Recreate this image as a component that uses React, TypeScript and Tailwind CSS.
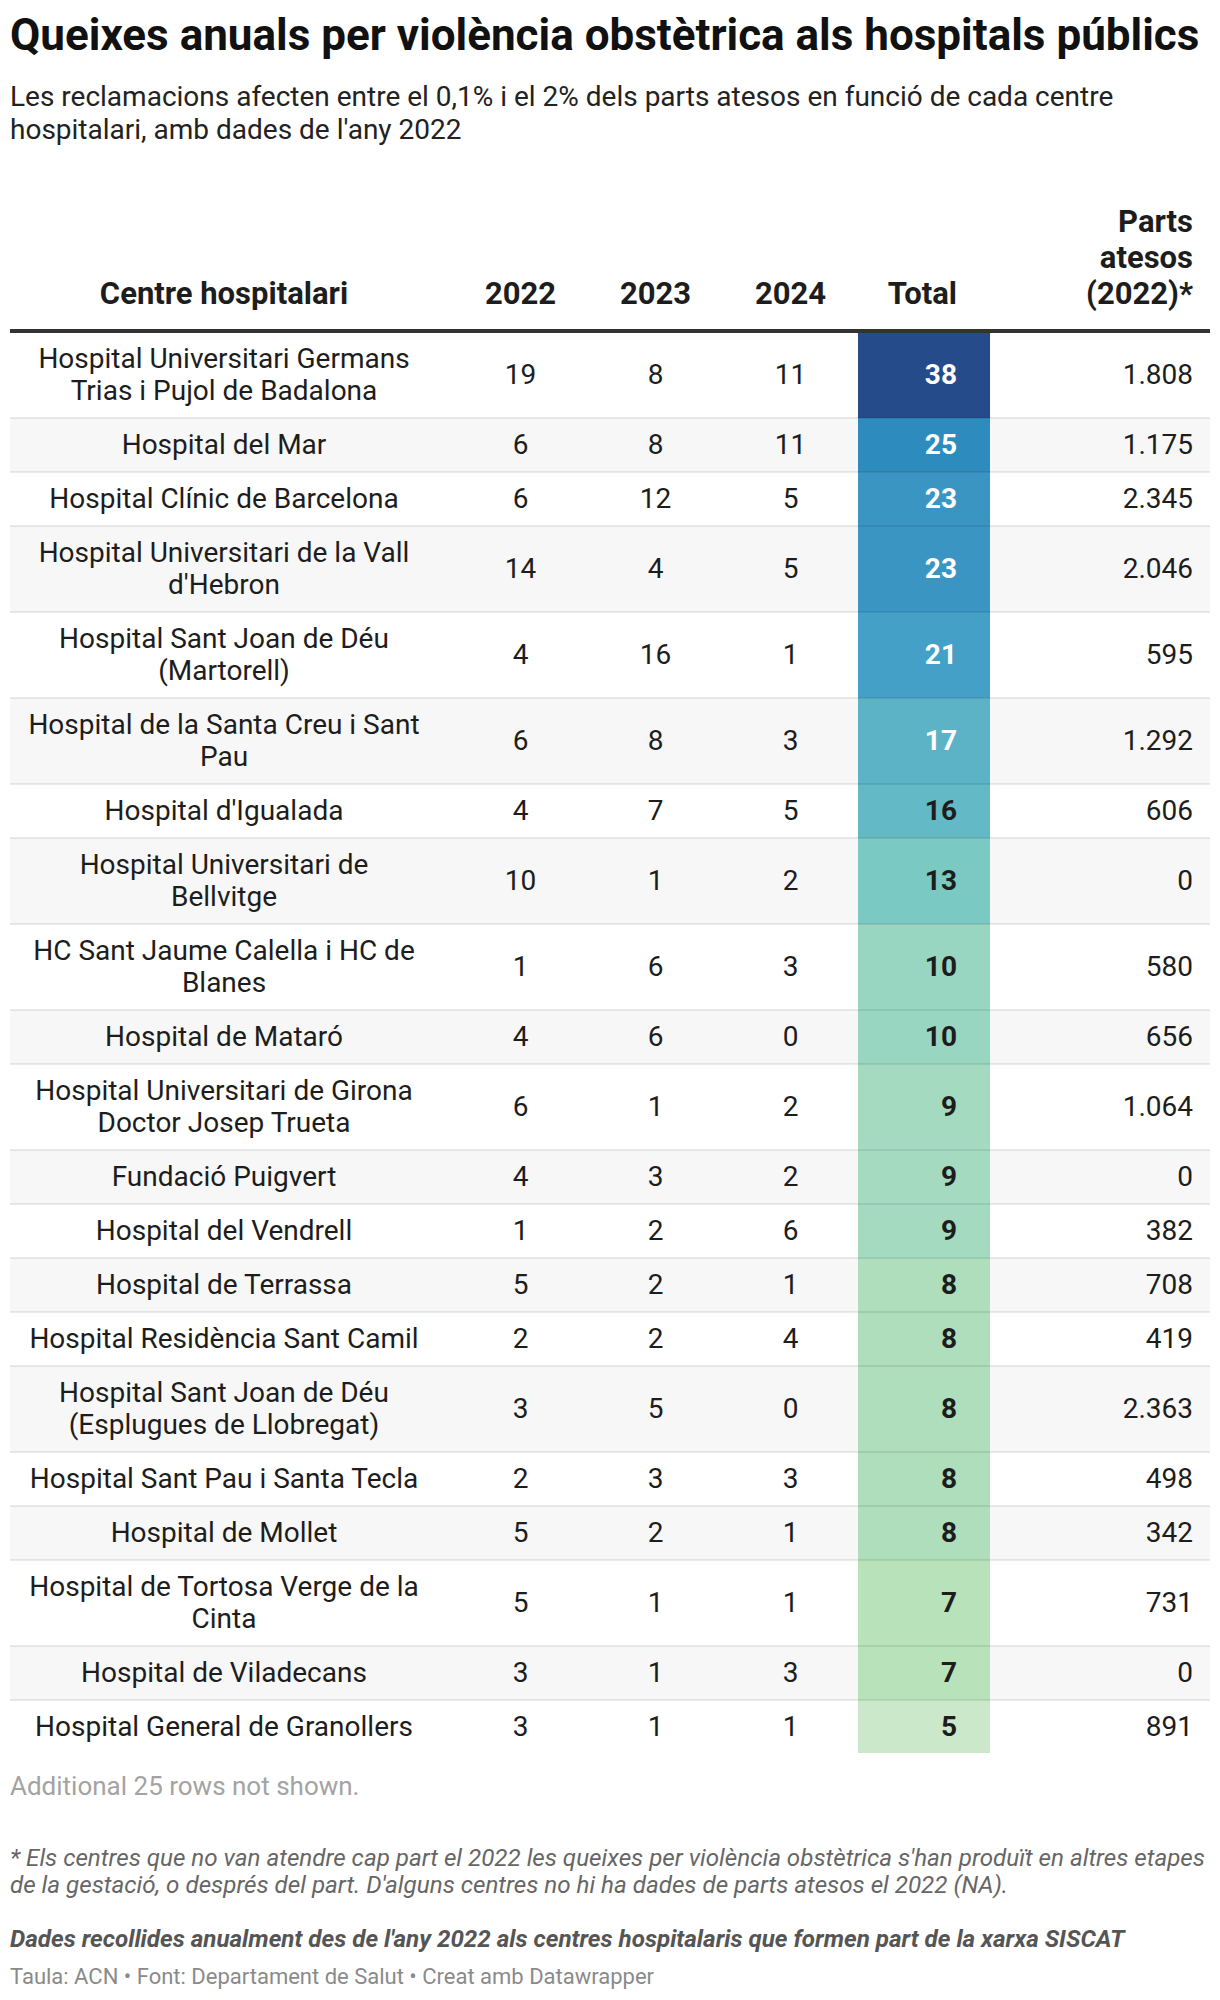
type Row = {
  name: string[];
  y22: number;
  y23: number;
  y24: number;
  total: number;
  parts: string;
};

const ROWS: Row[] = [
  { name: ["Hospital Universitari Germans", "Trias i Pujol de Badalona"], y22: 19, y23: 8, y24: 11, total: 38, parts: "1.808" },
  { name: ["Hospital del Mar"], y22: 6, y23: 8, y24: 11, total: 25, parts: "1.175" },
  { name: ["Hospital Clínic de Barcelona"], y22: 6, y23: 12, y24: 5, total: 23, parts: "2.345" },
  { name: ["Hospital Universitari de la Vall", "d'Hebron"], y22: 14, y23: 4, y24: 5, total: 23, parts: "2.046" },
  { name: ["Hospital Sant Joan de Déu", "(Martorell)"], y22: 4, y23: 16, y24: 1, total: 21, parts: "595" },
  { name: ["Hospital de la Santa Creu i Sant", "Pau"], y22: 6, y23: 8, y24: 3, total: 17, parts: "1.292" },
  { name: ["Hospital d'Igualada"], y22: 4, y23: 7, y24: 5, total: 16, parts: "606" },
  { name: ["Hospital Universitari de", "Bellvitge"], y22: 10, y23: 1, y24: 2, total: 13, parts: "0" },
  { name: ["HC Sant Jaume Calella i HC de", "Blanes"], y22: 1, y23: 6, y24: 3, total: 10, parts: "580" },
  { name: ["Hospital de Mataró"], y22: 4, y23: 6, y24: 0, total: 10, parts: "656" },
  { name: ["Hospital Universitari de Girona", "Doctor Josep Trueta"], y22: 6, y23: 1, y24: 2, total: 9, parts: "1.064" },
  { name: ["Fundació Puigvert"], y22: 4, y23: 3, y24: 2, total: 9, parts: "0" },
  { name: ["Hospital del Vendrell"], y22: 1, y23: 2, y24: 6, total: 9, parts: "382" },
  { name: ["Hospital de Terrassa"], y22: 5, y23: 2, y24: 1, total: 8, parts: "708" },
  { name: ["Hospital Residència Sant Camil"], y22: 2, y23: 2, y24: 4, total: 8, parts: "419" },
  { name: ["Hospital Sant Joan de Déu", "(Esplugues de Llobregat)"], y22: 3, y23: 5, y24: 0, total: 8, parts: "2.363" },
  { name: ["Hospital Sant Pau i Santa Tecla"], y22: 2, y23: 3, y24: 3, total: 8, parts: "498" },
  { name: ["Hospital de Mollet"], y22: 5, y23: 2, y24: 1, total: 8, parts: "342" },
  { name: ["Hospital de Tortosa Verge de la", "Cinta"], y22: 5, y23: 1, y24: 1, total: 7, parts: "731" },
  { name: ["Hospital de Viladecans"], y22: 3, y23: 1, y24: 3, total: 7, parts: "0" },
  { name: ["Hospital General de Granollers"], y22: 3, y23: 1, y24: 1, total: 5, parts: "891" },
];

// heatmap colours for the Total column
const HEAT: Record<number, string> = {
  38: "bg-[#254b8a] text-white",
  25: "bg-[#2d8bbd] text-white",
  23: "bg-[#3a95c2] text-white",
  21: "bg-[#45a0c7] text-white",
  17: "bg-[#5db3c6] text-white",
  16: "bg-[#63b9c6] text-[#1d1d1d]",
  13: "bg-[#7ac9c3] text-[#1d1d1d]",
  10: "bg-[#98d6c1] text-[#1d1d1d]",
  9: "bg-[#a4dac0] text-[#1d1d1d]",
  8: "bg-[#aedebb] text-[#1d1d1d]",
  7: "bg-[#b8e2ba] text-[#1d1d1d]",
  5: "bg-[#cbe9ca] text-[#1d1d1d]",
};

export default function App() {
  return (
    <div className="w-[1220px] bg-white px-[10px] pt-[9px] pb-[20px] font-['Roboto',sans-serif] text-[#1d1d1d]">
      <h1 className="whitespace-nowrap text-[44px] font-bold leading-[52px] text-[#111]">
        Queixes anuals per violència obstètrica als hospitals públics
      </h1>
      <p className="mt-[19px] text-[28px] leading-[33px] text-[#222]">
        Les reclamacions afecten entre el 0,1% i el 2% dels parts atesos en funció de cada centre hospitalari, amb
        dades de l'any 2022
      </p>

      <table className="mt-[58px] w-full table-fixed border-collapse">
        <colgroup>
          <col className="w-[443px]" />
          <col className="w-[135px]" />
          <col className="w-[135px]" />
          <col className="w-[135px]" />
          <col className="w-[132px]" />
          <col />
        </colgroup>
        <thead>
          <tr className="text-[31px] font-bold leading-[36px] text-[#1d1d1d]">
            <th className="border-b-4 border-[#333] pb-[17px] pl-[14px] pr-[29px] text-center align-bottom">
              Centre hospitalari
            </th>
            <th className="border-b-4 border-[#333] pb-[17px] text-center align-bottom">2022</th>
            <th className="border-b-4 border-[#333] pb-[17px] text-center align-bottom">2023</th>
            <th className="border-b-4 border-[#333] pb-[17px] text-center align-bottom">2024</th>
            <th className="border-b-4 border-[#333] pb-[17px] pr-[33px] text-right align-bottom">Total</th>
            <th className="border-b-4 border-[#333] pb-[17px] pr-[17px] text-right align-bottom">
              Parts
              <br />
              atesos
              <br />
              (2022)*
            </th>
          </tr>
        </thead>
        <tbody>
          {ROWS.map((r, i) => {
            const last = i === ROWS.length - 1;
            const cell = last ? "py-[10px]" : "border-b-2 border-[rgba(0,0,0,0.08)] py-[10px]";
            return (
              <tr
                key={i}
                className={`${i % 2 === 1 ? "bg-[#f7f7f7]" : "bg-white"} text-[28px] leading-[32px]`}
              >
                <td className={`${cell} pl-[14px] pr-[29px] text-center align-middle`}>
                  {r.name.map((line, j) => (
                    <div key={j} className="whitespace-nowrap">
                      {line}
                    </div>
                  ))}
                </td>
                <td className={`${cell} text-center align-middle`}>{r.y22}</td>
                <td className={`${cell} text-center align-middle`}>{r.y23}</td>
                <td className={`${cell} text-center align-middle`}>{r.y24}</td>
                <td className={`${cell} ${HEAT[r.total]} pr-[33px] text-right align-middle font-bold`}>
                  {r.total}
                </td>
                <td className={`${cell} pr-[17px] text-right align-middle`}>{r.parts}</td>
              </tr>
            );
          })}
        </tbody>
      </table>

      <p className="mt-[17px] text-[26px] leading-[32px] text-[#a3a3a3]">Additional 25 rows not shown.</p>

      <p className="mt-[43px] text-[24.2px] italic leading-[27px] text-[#666]">
        * Els centres que no van atendre cap part el 2022 les queixes per violència obstètrica s'han produït en
        altres etapes de la gestació, o després del part. D'alguns centres no hi ha dades de parts atesos el 2022
        (NA).
      </p>

      <p className="mt-[27px] text-[24.2px] font-bold italic leading-[27px] text-[#555]">
        Dades recollides anualment des de l'any 2022 als centres hospitalaris que formen part de la xarxa SISCAT
      </p>
      <p className="mt-[10px] text-[22px] leading-[27px] text-[#8a8a8a]">
        Taula: ACN • Font: Departament de Salut • Creat amb Datawrapper
      </p>
    </div>
  );
}
